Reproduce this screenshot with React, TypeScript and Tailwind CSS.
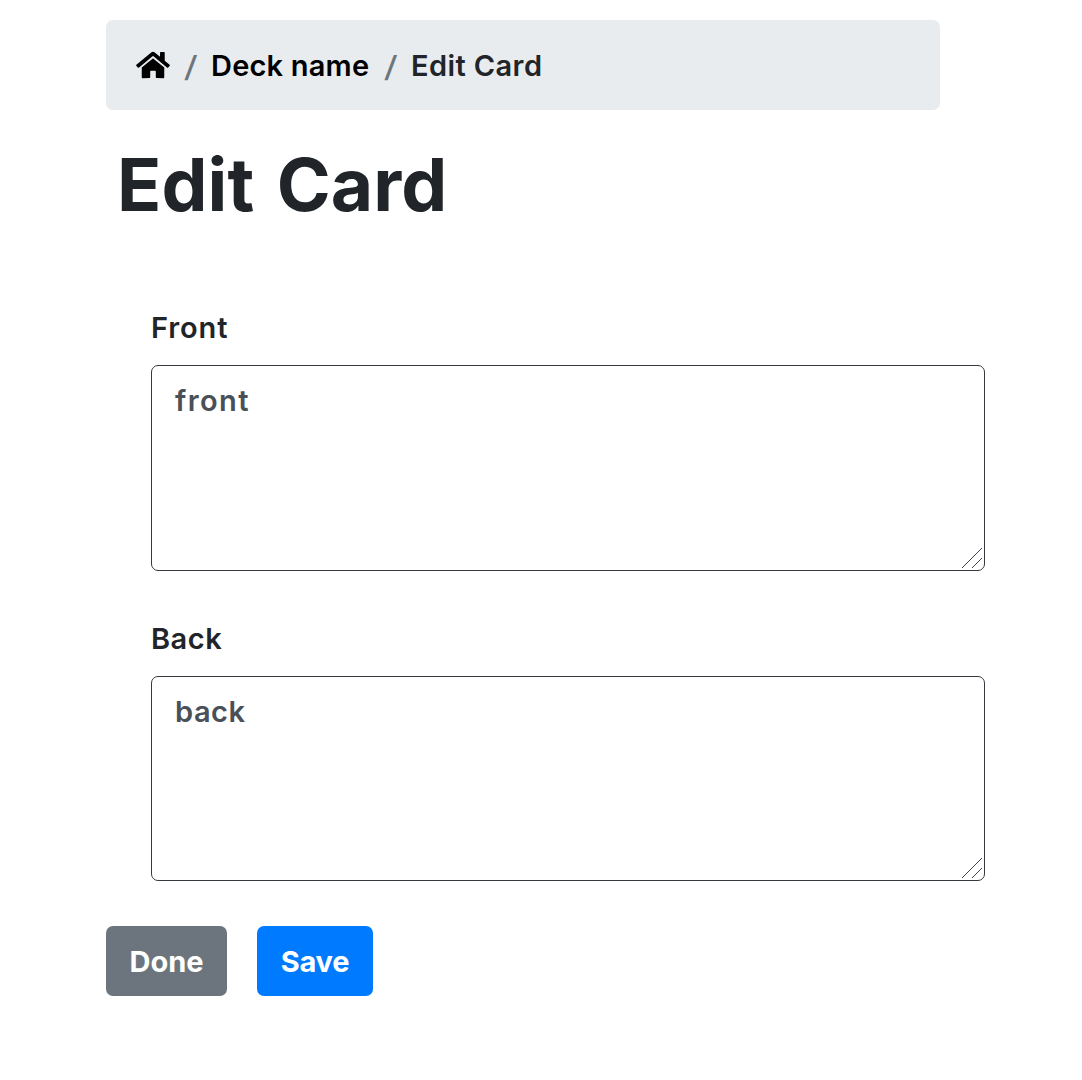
import { FaHome } from "react-icons/fa";

function Field({ label, value, className, labelClass, textClass }: {
  label: string;
  value: string;
  className: string;
  labelClass: string;
  textClass: string;
}) {
  const id = label.toLowerCase();
  return (
    <div className={className}>
      <label htmlFor={id} className={`block h-[45px] w-fit leading-[45px] ${labelClass}`}>
        {label}
      </label>
      <div className="relative mt-[15px] h-full">
        <textarea
          id={id}
          defaultValue={value}
          className={`block h-full w-full resize-none rounded-[7px] border border-[#343a40] bg-white px-[23px] pt-[12px] pb-[13px] leading-[45px] text-[#495057] outline-none ${textClass}`}
        />
        <svg
          className="pointer-events-none absolute right-[3px] bottom-[3px] size-[20px]"
          viewBox="0 0 20 20"
          fill="none"
          stroke="#444"
          strokeWidth="1"
        >
          <path d="M0 20 20 0M10 20 20 10" />
        </svg>
      </div>
    </div>
  );
}

function Separator({ className }: { className: string }) {
  return (
    <span className={`w-[12px] -skew-x-6 pt-[3px] text-center font-semibold text-[#6c757d] ${className}`}>
      /
    </span>
  );
}

export default function App() {
  return (
    <main className="h-[1080px] w-full overflow-hidden bg-white pt-5 pl-[106px] font-['Inter',sans-serif] text-[29px] font-semibold text-[#212529]">
      <nav className="flex h-[90px] w-[834px] items-center rounded-[7px] bg-[#e8ecef] pl-[30px]">
        <a href="#" aria-label="Home" className="text-black">
          <FaHome className="h-[30px] w-[34px]" />
        </a>
        <Separator className="ml-[15px]" />
        <a href="#" className="ml-[14px] w-[159px] pt-[2px] tracking-[0.2px] whitespace-nowrap text-black">Deck name</a>
        <Separator className="ml-[15px]" />
        <span className="ml-[14px] pt-[2px] tracking-[0.4px] whitespace-nowrap">Edit Card</span>
      </nav>
      <h1 className="mt-[30px] ml-[11px] h-[90px] w-fit text-[73px] leading-[90px] font-bold tracking-[0.1px] [word-spacing:5px] whitespace-nowrap">
        Edit Card
      </h1>
      <form className="mt-[75px] ml-[45px] w-[834px]">
        <Field label="Front" value="front" className="h-[206px]" labelClass="tracking-[0.9px]" textClass="tracking-[1.4px]" />
        <Field label="Back" value="back" className="mt-[105px] h-[205px]" labelClass="tracking-[0.5px]" textClass="tracking-[0.5px]" />
      </form>
      <div className="mt-[105px] flex gap-[30px] text-white">
        <button className="h-[70px] w-[121px] rounded-[7px] bg-[#6c757d] pt-[2px] font-bold">Done</button>
        <button className="h-[70px] w-[116px] rounded-[7px] bg-[#007bff] pt-[2px] font-bold tracking-[-0.3px]">Save</button>
      </div>
    </main>
  );
}
